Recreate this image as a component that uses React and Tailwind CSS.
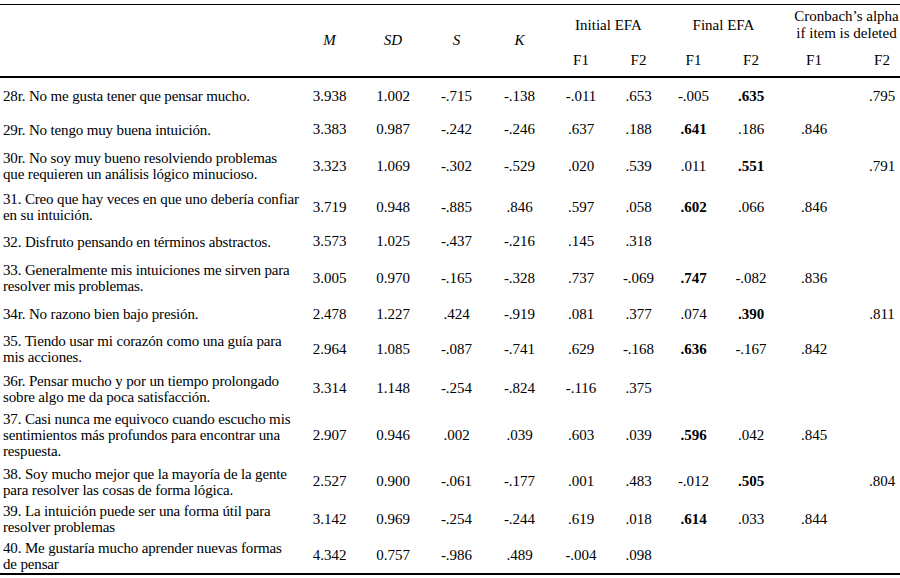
const cols = "grid grid-cols-[298px_63px_64px_63px_63px_60px_55px_55px_60px_66px_53px]";

const rows = [
  { h: "h-[36px]", text: ["28r. No me gusta tener que pensar mucho."], v: ["3.938", "1.002", "-.715", "-.138", "-.011", ".653", "-.005", ".635", "", ".795"], b: [7] },
  { h: "h-[31px]", text: ["29r. No tengo muy buena intuición."], v: ["3.383", "0.987", "-.242", "-.246", ".637", ".188", ".641", ".186", ".846", ""], b: [6] },
  { h: "h-[42px]", text: ["30r. No soy muy bueno resolviendo problemas", "que requieren un análisis lógico minucioso."], v: ["3.323", "1.069", "-.302", "-.529", ".020", ".539", ".011", ".551", "", ".791"], b: [7] },
  { h: "h-[40px]", text: ["31. Creo que hay veces en que uno debería confiar", "en su intuición."], v: ["3.719", "0.948", "-.885", ".846", ".597", ".058", ".602", ".066", ".846", ""], b: [6] },
  { h: "h-[29px]", text: ["32. Disfruto pensando en términos abstractos."], v: ["3.573", "1.025", "-.437", "-.216", ".145", ".318", "", "", "", ""], b: [] },
  { h: "h-[44px]", text: ["33. Generalmente mis intuiciones me sirven para", "resolver mis problemas."], v: ["3.005", "0.970", "-.165", "-.328", ".737", "-.069", ".747", "-.082", ".836", ""], b: [6] },
  { h: "h-[28px]", text: ["34r. No razono bien bajo presión."], v: ["2.478", "1.227", ".424", "-.919", ".081", ".377", ".074", ".390", "", ".811"], b: [7] },
  { h: "h-[42px]", text: ["35. Tiendo usar mi corazón como una guía para", "mis acciones."], v: ["2.964", "1.085", "-.087", "-.741", ".629", "-.168", ".636", "-.167", ".842", ""], b: [6] },
  { h: "h-[37px]", text: ["36r. Pensar mucho y por un tiempo prolongado", "sobre algo me da poca satisfacción."], v: ["3.314", "1.148", "-.254", "-.824", "-.116", ".375", "", "", "", ""], b: [] },
  { h: "h-[56px]", text: ["37. Casi nunca me equivoco cuando escucho mis", "sentimientos más profundos para encontrar una", "respuesta."], v: ["2.907", "0.946", ".002", ".039", ".603", ".039", ".596", ".042", ".845", ""], b: [6] },
  { h: "h-[37px]", text: ["38. Soy mucho mejor que la mayoría de la gente", "para resolver las cosas de forma lógica."], v: ["2.527", "0.900", "-.061", "-.177", ".001", ".483", "-.012", ".505", "", ".804"], b: [7] },
  { h: "h-[38px]", text: ["39. La intuición puede ser una forma útil para", "resolver problemas"], v: ["3.142", "0.969", "-.254", "-.244", ".619", ".018", ".614", ".033", ".844", ""], b: [6] },
  { h: "h-[35px]", text: ["40. Me gustaría mucho aprender nuevas formas", "de pensar"], v: ["4.342", "0.757", "-.986", ".489", "-.004", ".098", "", "", "", ""], b: [] },
];

const App = () => {
  return (
    <div className="w-[900px] h-[578px] bg-white pt-[4px] font-['Liberation_Serif',serif] text-[15px] text-black">
      <div className="border-t border-black">
        {/* header */}
        <div className={`${cols} grid-rows-[40px_31px] border-b-2 border-black`}>
          <div className="row-span-2" />
          <div className="row-span-2 flex items-center justify-center italic">M</div>
          <div className="row-span-2 flex items-center justify-center italic">SD</div>
          <div className="row-span-2 flex items-center justify-center italic">S</div>
          <div className="row-span-2 flex items-center justify-center italic">K</div>
          <div className="col-span-2 flex items-center justify-center">Initial EFA</div>
          <div className="col-span-2 flex items-center justify-center">Final EFA</div>
          <div className="col-span-2 flex flex-col items-center justify-center pl-[12px] leading-[17px]">
            <span>Cronbach’s alpha</span>
            <span>if item is deleted</span>
          </div>
          <div className="flex items-center justify-center">F1</div>
          <div className="flex items-center justify-center">F2</div>
          <div className="flex items-center justify-center">F1</div>
          <div className="flex items-center justify-center">F2</div>
          <div className="flex items-center justify-center">F1</div>
          <div className="flex items-center justify-center pl-[17px]">F2</div>
        </div>

        {/* body */}
        <div className="border-b-2 border-black">
          {rows.map((r, i) => (
            <div key={i} className={`${cols} ${r.h}`}>
              <div className="flex flex-col justify-center pl-[3px] leading-[16px] tracking-[-0.15px] whitespace-nowrap">
                {r.text.map((t, j) => (
                  <span key={j}>{t}</span>
                ))}
              </div>
              {r.v.map((val, k) => (
                <div
                  key={k}
                  className={`flex items-center justify-center ${k === 9 ? "pl-[17px]" : ""} ${r.b.includes(k) ? "font-bold" : ""}`}
                >
                  {val}
                </div>
              ))}
            </div>
          ))}
        </div>
      </div>
    </div>
  );
};

export default App;
